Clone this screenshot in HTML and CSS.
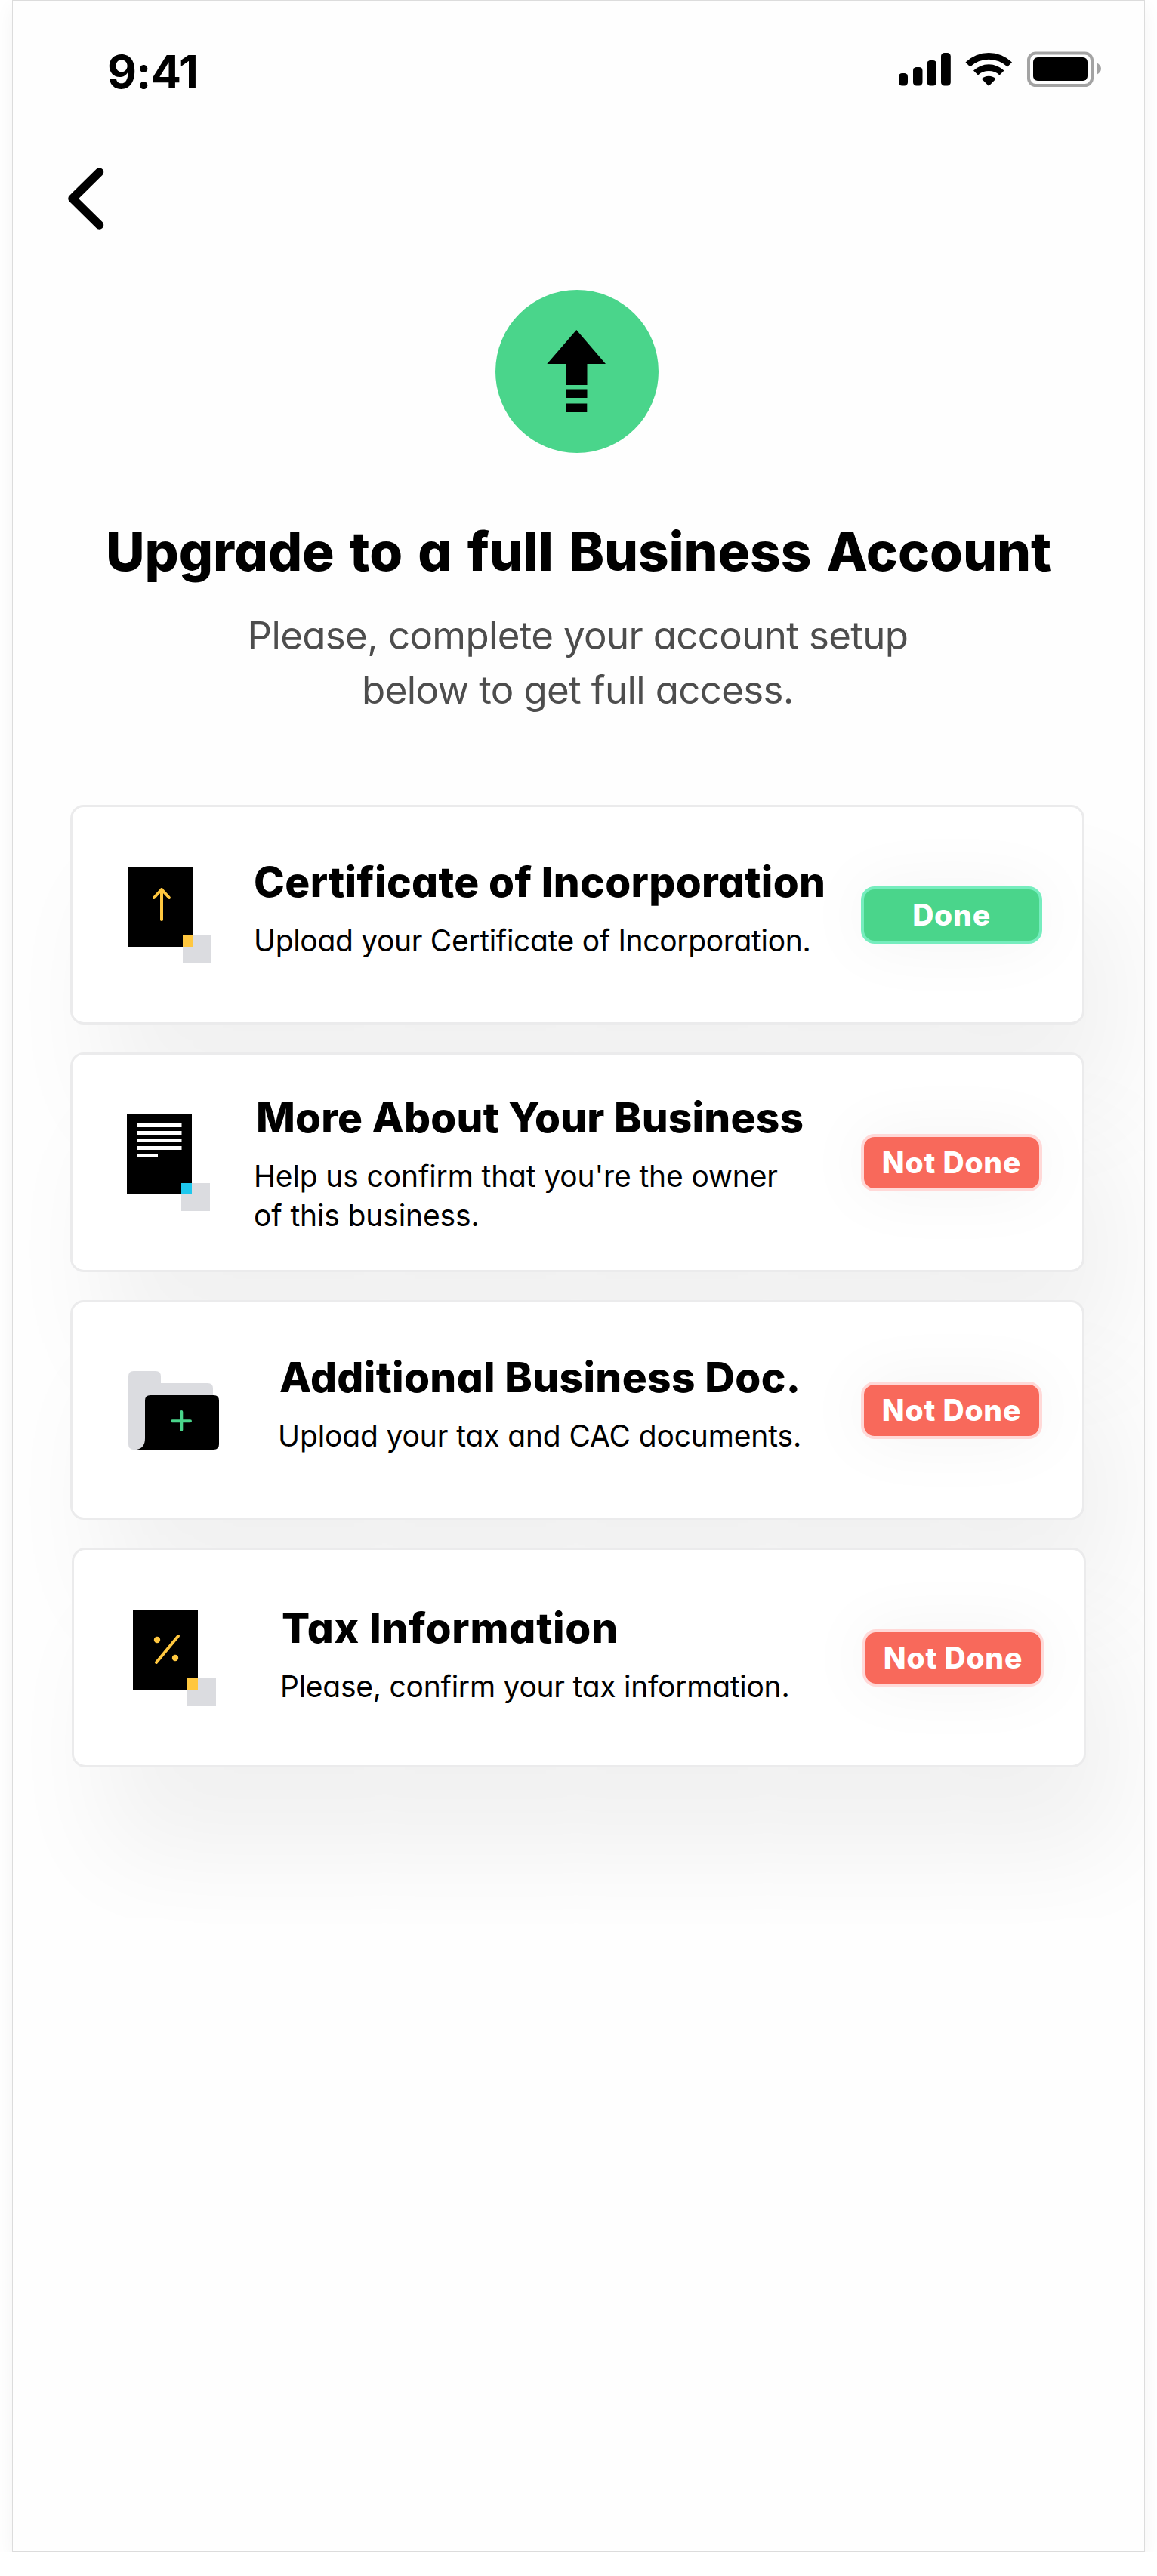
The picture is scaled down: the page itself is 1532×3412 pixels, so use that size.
FILE: index.html
```html
<!DOCTYPE html>
<html lang="en">
<head>
<meta charset="utf-8">
<title>Upgrade to a full Business Account</title>
<link rel="stylesheet" href="styles.css">
</head>
<body>
<main class="screen">
  <header class="status">
    <span class="time">9:41</span>
    <svg class="status-icons" width="270" height="50" viewBox="1190 67 270 50">
      <rect x="1190" y="97" width="12" height="16.500" rx="4.500"/>
      <rect x="1209" y="89" width="12.500" height="24.500" rx="4.500"/>
      <rect x="1227.500" y="80" width="12.500" height="33.500" rx="4.500"/>
      <rect x="1246" y="70" width="12.800" height="43.500" rx="4.500"/>
      <path d="M1278.500 82.500a44 44 0 0 1 61.500 0l-6 6a36 36 0 0 0-49.500 0zM1289 93.500a29 29 0 0 1 40.500 0l-6 6a21 21 0 0 0-28.500 0zM1299.800 104.500a14 14 0 0 1 18.900 0l-9.450 9.500z"/>
      <rect x="1362" y="70.500" width="84" height="42.500" rx="9.500" fill="none" stroke="#a3a3a3" stroke-width="4"/>
      <rect x="1368" y="76" width="72" height="31" rx="6"/>
      <path d="M1452 83c4 2 6 5 6 8s-2 6-6 8z" fill="#a3a3a3"/>
    </svg>
  </header>
  <nav class="nav">
    <svg width="50" height="84" viewBox="0 0 50 84"><path d="M43.500 7 8 42l35.500 35" fill="none" stroke="#000" stroke-width="11.500" stroke-linecap="round" stroke-linejoin="round"/></svg>
  </nav>
  <section class="hero">
    <svg class="badge" width="216" height="216" viewBox="656 384 216 216">
      <circle cx="764" cy="492" r="108" fill="#4ad58b"/>
      <path d="M763.300 437 802 482h-24.500v28H749v-28h-24.700zM749 515.500h28.500v11.500H749zM749 534.500h28.300v11.500H749z"/>
    </svg>
    <h1 class="title">Upgrade to a full Business Account</h1>
    <p class="lead">Please, complete your account setup<br>below to get full access.</p>
  </section>
  <section class="list">
    <article class="card certificate">
      <svg class="icon" width="120" height="130" viewBox="0 0 120 130">
        <path d="M0 0h86v106H0z"/><path d="M72 91h38v37H72z" fill="#dbdce0"/><path d="M72 91h14v15H72z" fill="#ffc73f"/>
        <path d="M44 70V30M34 41l10-11 10 11" fill="none" stroke="#ffc73f" stroke-width="4" stroke-linecap="round" stroke-linejoin="round"/>
      </svg>
      <div class="text"><h2>Certificate of Incorporation</h2><p>Upload your Certificate of Incorporation.</p></div>
      <span class="pill done">Done</span>
    </article>
    <article class="card about">
      <svg class="icon" width="120" height="130" viewBox="0 0 120 130">
        <path d="M0 0h86v106H0z"/><path d="M72 91h38v37H72z" fill="#dbdce0"/><path d="M72 91h14v15H72z" fill="#1ec8ee"/>
        <path d="M13.500 12h59v5h-59zM13.500 22h59v5h-59zM13.500 32h59v5h-59zM13.500 42h59v5h-59zM13.500 52h27.500v4.500h-27.500z" fill="#fff"/>
      </svg>
      <div class="text"><h2>More About Your Business</h2><p>Help us confirm that you're the owner<br>of this business.</p></div>
      <span class="pill todo">Not Done</span>
    </article>
    <article class="card documents">
      <svg class="icon" width="120" height="106" viewBox="0 0 120 106">
        <path d="M7 0h29q7 0 7 7v9h62q7 0 7 7v20L50 60 22 90q0 14-9 14H7q-7 0-7-7V7q0-7 7-7z" fill="#dbdce0"/>
        <path d="M29 32h84q7 0 7 7v58q0 7-7 7H11q11-2 11-15V39q0-7 7-7z"/>
        <path d="M70.300 54v24M58 66.200h24" fill="none" stroke="#4ad58b" stroke-width="4" stroke-linecap="round"/>
      </svg>
      <div class="text"><h2>Additional Business Doc.</h2><p>Upload your tax and CAC documents.</p></div>
      <span class="pill todo">Not Done</span>
    </article>
    <article class="card tax">
      <svg class="icon" width="120" height="130" viewBox="0 0 120 130">
        <path d="M0 0h86v106H0z"/><path d="M72 91h38v37H72z" fill="#dbdce0"/><path d="M72 91h14v15H72z" fill="#ffc73f"/>
        <circle cx="32" cy="40" r="4.200" fill="#ffc73f"/><circle cx="56" cy="64" r="4.200" fill="#ffc73f"/>
        <path d="M31 70 60 35" stroke="#ffc73f" stroke-width="4" stroke-linecap="round"/>
      </svg>
      <div class="text"><h2>Tax Information</h2><p>Please, confirm your tax information.</p></div>
      <span class="pill todo">Not Done</span>
    </article>
  </section>
</main>
</body>
</html>
```

FILE: styles.css
```css
* { box-sizing: border-box; margin: 0; padding: 0; }
body { background: #fff; font-family: Inter, "Open Sans", sans-serif; font-feature-settings: "cv11"; color: #000; overflow: hidden; }
svg { display: block; flex: none; }
.screen { width: 1500px; height: 3380px; margin-left: 16px; border: 1px solid #dcdcdc; background: #fefefe; box-shadow: 0 10px 24px rgba(0, 0, 0, .05); overflow: hidden; }
.status { display: flex; justify-content: space-between; align-items: flex-start; padding: 66px 55px 0 125px; height: 219px; }
.time { margin-top: -1px; font-size: 60px; line-height: 58px; font-weight: 700; letter-spacing: -.8px; }
.nav { padding: 1px 0 0 71px; height: 163px; }
.hero { display: flex; flex-direction: column; align-items: center; height: 683px; padding-top: 1px; text-align: center; }
.badge { margin-right: 4px; }
.title { margin-top: 87px; font-size: 71px; line-height: 86px; font-weight: 800; letter-spacing: -.1px; word-spacing: 4.8px; white-space: nowrap; }
.lead { margin-top: 33px; margin-right: 2px; font-size: 51px; line-height: 72px; letter-spacing: -.65px; color: #4d4d4d; white-space: nowrap; }
.list { display: flex; flex-direction: column; gap: 37px; padding-left: 76px; }
.card { display: flex; position: relative; width: 1343px; height: 291px; border: 3px solid #ebebec; border-radius: 18px; background: #fff; box-shadow: 46px 115px 140px rgba(0, 0, 0, .053); }
.icon { margin: 79px 0 0 74px; }
.text { width: 804px; margin: 66px 0 0 46px; flex: none; white-space: nowrap; }
.text h2 { font-size: 55px; line-height: 66px; font-weight: 800; letter-spacing: .35px; }
.text p { margin-top: 19px; font-size: 39px; line-height: 52px; letter-spacing: -.13px; }
.pill { flex: none; display: flex; align-items: center; justify-content: center; width: 240px; height: 76px; margin-top: 105px; padding-bottom: 1px; border: 4px solid; border-radius: 18px; color: #fff; font-size: 39px; font-weight: 800; letter-spacing: .8px; white-space: nowrap; box-shadow: 0 0 90px rgba(0, 0, 0, .05); }
.done { background: #4ad58b; border-color: #76edbe; }
.todo { background: #f8695b; border-color: #ffd9d8; }
.certificate p { letter-spacing: -.33px; }
.about .icon { margin-left: 72px; }
.about .text { margin: 50px 0 0 48px; }
.about h2 { padding-left: 3px; letter-spacing: .2px; }
.documents .icon { margin-top: 91px; }
.documents .text { width: 772px; margin-left: 78px; }
.documents h2 { padding-left: 2px; }
.tax { margin-left: 2px; }
.tax .icon { margin-left: 78px; }
.tax .text { width: 771px; margin: 70px 0 0 75px; }
.tax h2 { padding-left: 2px; letter-spacing: .8px; }
.tax p { letter-spacing: -.25px; }
```
